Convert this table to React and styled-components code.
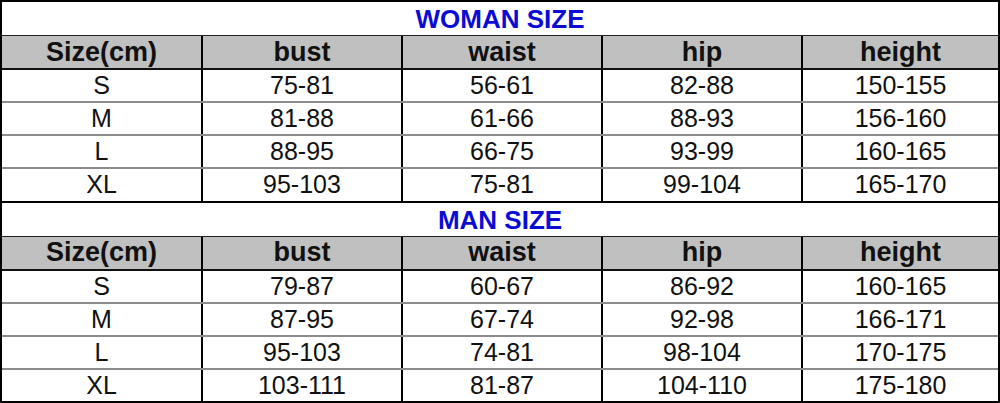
import React from 'react';
import styled, { createGlobalStyle } from 'styled-components';

const GlobalStyle = createGlobalStyle`
  html, body {
    margin: 0;
    padding: 0;
    background: #ffffff;
  }
  body {
    font-family: "Liberation Sans", Arial, sans-serif;
  }
`;

const Chart = styled.div`
  width: 1000px;
  height: 403px;
  box-sizing: border-box;
  border: 2px solid #000;
  display: grid;
  grid-template-rows: repeat(12, 1fr);
  background: #fff;
`;

const TitleRow = styled.div`
  display: flex;
  align-items: center;
  justify-content: center;
  color: #0b0bd6;
  font-size: 26px;
  font-weight: 700;
  padding-top: 2px;
  border-top: ${(p) => (p.$first ? 'none' : '2px solid #000')};
`;

const Row = styled.div`
  display: grid;
  grid-template-columns: 199px 200px 200px 200px 1fr;
  background: ${(p) => (p.$head ? '#c0c0c0' : '#fff')};
  border-top: ${(p) => p.$line};
  box-sizing: border-box;
`;

const Cell = styled.div`
  display: flex;
  align-items: center;
  justify-content: center;
  font-size: ${(p) => (p.$head ? '27px' : '25px')};
  font-weight: ${(p) => (p.$head ? 700 : 400)};
  color: #111;
  & + & {
    border-left: 2px solid #000;
  }
`;

const columns = ['Size(cm)', 'bust', 'waist', 'hip', 'height'];

const tables = [
  {
    title: 'WOMAN SIZE',
    rows: [
      ['S', '75-81', '56-61', '82-88', '150-155'],
      ['M', '81-88', '61-66', '88-93', '156-160'],
      ['L', '88-95', '66-75', '93-99', '160-165'],
      ['XL', '95-103', '75-81', '99-104', '165-170'],
    ],
  },
  {
    title: 'MAN SIZE',
    rows: [
      ['S', '79-87', '60-67', '86-92', '160-165'],
      ['M', '87-95', '67-74', '92-98', '166-171'],
      ['L', '95-103', '74-81', '98-104', '170-175'],
      ['XL', '103-111', '81-87', '104-110', '175-180'],
    ],
  },
];

function SizeBlock({ title, rows, first }) {
  return (
    <>
      <TitleRow $first={first}>{title}</TitleRow>
      <Row $head $line="1px solid #222">
        {columns.map((c) => (
          <Cell key={c} $head>
            {c}
          </Cell>
        ))}
      </Row>
      {rows.map((r, i) => (
        <Row key={r[0]} $line={i === 0 ? '2px solid #111' : '2px solid #8c8c8c'}>
          {r.map((v, j) => (
            <Cell key={j}>{v}</Cell>
          ))}
        </Row>
      ))}
    </>
  );
}

export default function App() {
  return (
    <>
      <GlobalStyle />
      <Chart>
        {tables.map((t, i) => (
          <SizeBlock key={t.title} title={t.title} rows={t.rows} first={i === 0} />
        ))}
      </Chart>
    </>
  );
}
